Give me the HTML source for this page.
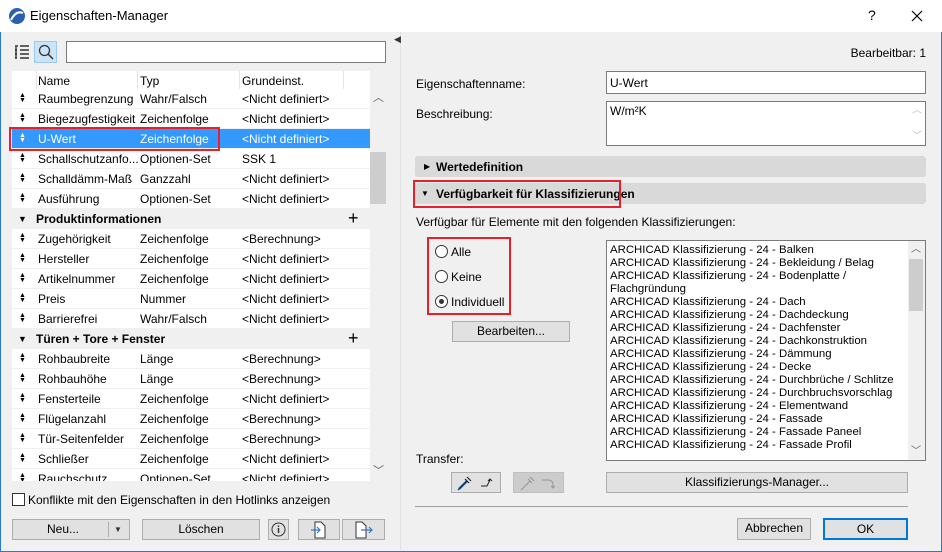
<!DOCTYPE html>
<html><head><meta charset="utf-8"><style>
*{box-sizing:border-box;margin:0;padding:0}
body{width:942px;height:552px;overflow:hidden;background:#f0f0f0;font-family:"Liberation Sans",sans-serif;font-size:12px;color:#000;position:relative}
.a{position:absolute}
.t{position:absolute;white-space:nowrap;line-height:14px}
.btn{position:absolute;background:#e1e1e1;border:1px solid #adadad;text-align:center;line-height:19px}
.row{position:absolute;left:12px;width:358px;height:20px;background:#fff;border-bottom:1px solid #f0f0f0}
.row span{position:absolute;top:3px;white-space:nowrap}
.row span.s{left:7px;top:4px;font-size:7px;line-height:5px}
.grp{background:#f0f0f0;font-weight:bold}
.sel{background:#3399ff;color:#fff}
.li{position:absolute;left:610px;white-space:nowrap;line-height:13px;font-size:11.4px}
</style></head><body>
<div class="a" style="left:0;top:0;width:942px;height:552px;border:1px solid #2b79d4;border-top:none"></div>
<div class="a" style="left:0;top:0;width:942px;height:32px;background:#fff"></div>
<svg class="a" style="left:8px;top:7px" width="18" height="18"><circle cx="9" cy="9" r="8" fill="#2d5fb0"/><path d="M3 13 Q8 3 15 6" stroke="#fff" stroke-width="2" fill="none"/></svg>
<div class="t" style="left:30px;top:9px;font-size:13px">Eigenschaften-Manager</div>
<div class="t" style="left:868px;top:8px;font-size:14px">?</div>
<svg class="a" style="left:911px;top:10px" width="12" height="12"><path d="M1 1L11 11M11 1L1 11" stroke="#000" stroke-width="1.2"/></svg>

<svg class="a" style="left:14px;top:45px" width="16" height="14"><path d="M1 1h3M6 1h9M1 5h2M6 5h9M1 9h2M6 9h9M1 13h2M6 13h9M2 2v11" stroke="#333" stroke-width="1.4" fill="none"/></svg>
<div class="a" style="left:34px;top:41px;width:23px;height:22px;background:#cce4f7;border:1px solid #99c9ef"></div>
<svg class="a" style="left:38px;top:44px" width="16" height="16"><circle cx="6.5" cy="6.5" r="5" stroke="#333" stroke-width="1.3" fill="none"/><path d="M10 10l5 5" stroke="#333" stroke-width="1.5"/></svg>
<div class="a" style="left:66px;top:41px;width:320px;height:22px;background:#fff;border:1px solid #7a7a7a"></div>

<div class="a" style="left:12px;top:71px;width:358px;height:18px;background:#fff"></div>
<div class="t" style="left:38px;top:74px">Name</div>
<div class="t" style="left:140px;top:74px">Typ</div>
<div class="t" style="left:242px;top:74px">Grundeinst.</div>
<div class="a" style="left:36px;top:71px;width:1px;height:18px;background:#e5e5e5"></div>
<div class="a" style="left:137px;top:71px;width:1px;height:18px;background:#e5e5e5"></div>
<div class="a" style="left:239px;top:71px;width:1px;height:18px;background:#e5e5e5"></div>
<div class="a" style="left:343px;top:71px;width:1px;height:18px;background:#e5e5e5"></div>

<div class="a" style="left:12px;top:89px;width:358px;height:392px;overflow:hidden">
<div style="position:relative;left:-12px;top:-89px">
<div class="row" style="top:89px"><span class="s">▲<br>▼</span><span style="left:26px">Raumbegrenzung</span><span style="left:128px">Wahr/Falsch</span><span style="left:230px">&lt;Nicht definiert&gt;</span></div>
<div class="row" style="top:109px"><span class="s">▲<br>▼</span><span style="left:26px">Biegezugfestigkeit</span><span style="left:128px">Zeichenfolge</span><span style="left:230px">&lt;Nicht definiert&gt;</span></div>
<div class="row sel" style="top:129px"><span class="s">▲<br>▼</span><span style="left:26px">U-Wert</span><span style="left:128px">Zeichenfolge</span><span style="left:230px">&lt;Nicht definiert&gt;</span></div>
<div class="row" style="top:149px"><span class="s">▲<br>▼</span><span style="left:26px">Schallschutzanfo...</span><span style="left:128px">Optionen-Set</span><span style="left:230px">SSK 1</span></div>
<div class="row" style="top:169px"><span class="s">▲<br>▼</span><span style="left:26px">Schalldämm-Maß</span><span style="left:128px">Ganzzahl</span><span style="left:230px">&lt;Nicht definiert&gt;</span></div>
<div class="row" style="top:189px"><span class="s">▲<br>▼</span><span style="left:26px">Ausführung</span><span style="left:128px">Optionen-Set</span><span style="left:230px">&lt;Nicht definiert&gt;</span></div>
<div class="row grp" style="top:209px"><span style="left:6px;font-size:9px;top:5px">▼</span><span style="left:24px">Produktinformationen</span><span style="left:336px;font-weight:normal;font-size:18px;top:-1px">+</span></div>
<div class="row" style="top:229px"><span class="s">▲<br>▼</span><span style="left:26px">Zugehörigkeit</span><span style="left:128px">Zeichenfolge</span><span style="left:230px">&lt;Berechnung&gt;</span></div>
<div class="row" style="top:249px"><span class="s">▲<br>▼</span><span style="left:26px">Hersteller</span><span style="left:128px">Zeichenfolge</span><span style="left:230px">&lt;Nicht definiert&gt;</span></div>
<div class="row" style="top:269px"><span class="s">▲<br>▼</span><span style="left:26px">Artikelnummer</span><span style="left:128px">Zeichenfolge</span><span style="left:230px">&lt;Nicht definiert&gt;</span></div>
<div class="row" style="top:289px"><span class="s">▲<br>▼</span><span style="left:26px">Preis</span><span style="left:128px">Nummer</span><span style="left:230px">&lt;Nicht definiert&gt;</span></div>
<div class="row" style="top:309px"><span class="s">▲<br>▼</span><span style="left:26px">Barrierefrei</span><span style="left:128px">Wahr/Falsch</span><span style="left:230px">&lt;Nicht definiert&gt;</span></div>
<div class="row grp" style="top:329px"><span style="left:6px;font-size:9px;top:5px">▼</span><span style="left:24px">Türen + Tore + Fenster</span><span style="left:336px;font-weight:normal;font-size:18px;top:-1px">+</span></div>
<div class="row" style="top:349px"><span class="s">▲<br>▼</span><span style="left:26px">Rohbaubreite</span><span style="left:128px">Länge</span><span style="left:230px">&lt;Berechnung&gt;</span></div>
<div class="row" style="top:369px"><span class="s">▲<br>▼</span><span style="left:26px">Rohbauhöhe</span><span style="left:128px">Länge</span><span style="left:230px">&lt;Berechnung&gt;</span></div>
<div class="row" style="top:389px"><span class="s">▲<br>▼</span><span style="left:26px">Fensterteile</span><span style="left:128px">Zeichenfolge</span><span style="left:230px">&lt;Nicht definiert&gt;</span></div>
<div class="row" style="top:409px"><span class="s">▲<br>▼</span><span style="left:26px">Flügelanzahl</span><span style="left:128px">Zeichenfolge</span><span style="left:230px">&lt;Berechnung&gt;</span></div>
<div class="row" style="top:429px"><span class="s">▲<br>▼</span><span style="left:26px">Tür-Seitenfelder</span><span style="left:128px">Zeichenfolge</span><span style="left:230px">&lt;Berechnung&gt;</span></div>
<div class="row" style="top:449px"><span class="s">▲<br>▼</span><span style="left:26px">Schließer</span><span style="left:128px">Zeichenfolge</span><span style="left:230px">&lt;Nicht definiert&gt;</span></div>
<div class="row" style="top:469px"><span class="s">▲<br>▼</span><span style="left:26px">Rauchschutz</span><span style="left:128px">Optionen-Set</span><span style="left:230px">&lt;Nicht definiert&gt;</span></div>
</div></div>
<div class="a" style="left:9px;top:127px;width:211px;height:24px;border:2px solid #e8202a"></div>
<div class="a" style="left:370px;top:89px;width:16px;height:392px;background:#f0f0f0"></div>
<div class="t" style="left:373px;top:91px;font-size:11px;color:#606060">︿</div>
<div class="a" style="left:370px;top:152px;width:16px;height:52px;background:#cdcdcd"></div>
<div class="t" style="left:373px;top:464px;font-size:11px;color:#606060">﹀</div>

<div class="a" style="left:12px;top:493px;width:13px;height:13px;background:#fff;border:1px solid #333"></div>
<div class="t" style="left:28px;top:493px">Konflikte mit den Eigenschaften in den Hotlinks anzeigen</div>
<div class="btn" style="left:12px;top:519px;width:118px;height:21px;text-align:left;padding-left:34px">Neu...</div>
<div class="a" style="left:108px;top:522px;width:1px;height:15px;background:#adadad"></div>
<div class="t" style="left:114px;top:523px;font-size:8px;color:#333">▼</div>
<div class="btn" style="left:142px;top:519px;width:118px;height:21px">Löschen</div>
<div class="btn" style="left:268px;top:519px;width:21px;height:21px"></div>
<svg class="a" style="left:271px;top:522px" width="15" height="15"><circle cx="7.5" cy="7.5" r="6.5" stroke="#333" fill="none"/><path d="M7.5 6v5M7.5 3.5v1.5" stroke="#333" stroke-width="1.5"/></svg>
<div class="btn" style="left:298px;top:519px;width:42px;height:21px"></div>
<svg class="a" style="left:310px;top:521px" width="18" height="18"><path d="M5 1h6l4 4v12H5z" stroke="#333" fill="#fff"/><path d="M1 9h9M7 6l3 3-3 3" stroke="#2b79d4" fill="none" stroke-width="1.2"/></svg>
<div class="btn" style="left:342px;top:519px;width:43px;height:21px"></div>
<svg class="a" style="left:354px;top:521px" width="20" height="18"><path d="M2 1h6l4 4v12H2z" stroke="#333" fill="#fff"/><path d="M7 9h11M15 6l3 3-3 3" stroke="#2b79d4" fill="none" stroke-width="1.2"/></svg>

<div class="a" style="left:400px;top:32px;width:1px;height:518px;background:#e0e0e0"></div>
<div class="t" style="left:394px;top:32px;font-size:9px;color:#333">◀</div>

<div class="t" style="left:840px;top:46px;width:86px;text-align:right">Bearbeitbar: 1</div>
<div class="t" style="left:416px;top:77px">Eigenschaftenname:</div>
<div class="a" style="left:606px;top:71px;width:320px;height:23px;background:#fff;border:1px solid #7a7a7a"></div>
<div class="t" style="left:610px;top:76px">U-Wert</div>
<div class="t" style="left:416px;top:107px">Beschreibung:</div>
<div class="a" style="left:606px;top:101px;width:320px;height:45px;background:#fff;border:1px solid #7a7a7a"></div>
<div class="t" style="left:610px;top:104px">W/m²K</div>
<div class="t" style="left:912px;top:104px;font-size:10px;color:#bbb">︿</div>
<div class="t" style="left:912px;top:130px;font-size:10px;color:#bbb">﹀</div>

<div class="a" style="left:415px;top:156px;width:511px;height:21px;background:#d9d9d9;border-radius:3px"></div>
<div class="t" style="left:424px;top:160px;font-size:8px">▶</div>
<div class="t" style="left:436px;top:160px;font-weight:bold">Wertedefinition</div>
<div class="a" style="left:415px;top:183px;width:511px;height:21px;background:#d9d9d9;border-radius:3px"></div>
<div class="t" style="left:421px;top:187px;font-size:8px">▼</div>
<div class="t" style="left:436px;top:187px;font-weight:bold">Verfügbarkeit für Klassifizierungen</div>
<div class="a" style="left:413px;top:180px;width:208px;height:28px;border:2px solid #e8202a"></div>
<div class="t" style="left:416px;top:215px">Verfügbar für Elemente mit den folgenden Klassifizierungen:</div>

<div class="a" style="left:427px;top:237px;width:84px;height:78px;border:2px solid #e8202a"></div>
<div class="a" style="left:435px;top:245px;width:13px;height:13px;border-radius:50%;border:1px solid #333;background:#fff"></div>
<div class="t" style="left:451px;top:245px">Alle</div>
<div class="a" style="left:435px;top:270px;width:13px;height:13px;border-radius:50%;border:1px solid #333;background:#fff"></div>
<div class="t" style="left:451px;top:270px">Keine</div>
<div class="a" style="left:435px;top:295px;width:13px;height:13px;border-radius:50%;border:1px solid #333;background:#fff"></div>
<div class="a" style="left:439px;top:299px;width:5px;height:5px;border-radius:50%;background:#333"></div>
<div class="t" style="left:451px;top:295px">Individuell</div>
<div class="btn" style="left:452px;top:321px;width:118px;height:21px">Bearbeiten...</div>

<div class="a" style="left:606px;top:240px;width:320px;height:221px;background:#fff;border:1px solid #7a7a7a"></div>
<div class="li" style="top:244px">ARCHICAD Klassifizierung - 24 - Balken<br>ARCHICAD Klassifizierung - 24 - Bekleidung / Belag<br>ARCHICAD Klassifizierung - 24 - Bodenplatte /<br>Flachgründung<br>ARCHICAD Klassifizierung - 24 - Dach<br>ARCHICAD Klassifizierung - 24 - Dachdeckung<br>ARCHICAD Klassifizierung - 24 - Dachfenster<br>ARCHICAD Klassifizierung - 24 - Dachkonstruktion<br>ARCHICAD Klassifizierung - 24 - Dämmung<br>ARCHICAD Klassifizierung - 24 - Decke<br>ARCHICAD Klassifizierung - 24 - Durchbrüche / Schlitze<br>ARCHICAD Klassifizierung - 24 - Durchbruchsvorschlag<br>ARCHICAD Klassifizierung - 24 - Elementwand<br>ARCHICAD Klassifizierung - 24 - Fassade<br>ARCHICAD Klassifizierung - 24 - Fassade Paneel<br>ARCHICAD Klassifizierung - 24 - Fassade Profil</div>
<div class="a" style="left:908px;top:241px;width:17px;height:219px;background:#f0f0f0"></div>
<div class="t" style="left:911px;top:243px;font-size:10px;color:#606060">︿</div>
<div class="a" style="left:909px;top:259px;width:14px;height:52px;background:#cdcdcd"></div>
<div class="t" style="left:911px;top:445px;font-size:10px;color:#606060">﹀</div>

<div class="t" style="left:416px;top:452px">Transfer:</div>
<div class="btn" style="left:451px;top:472px;width:50px;height:21px"></div>
<svg class="a" style="left:456px;top:474px" width="42" height="17"><path d="M3 15l8-8" stroke="#2b79d4" stroke-width="2.5"/><path d="M2 16l9-9M9 5l4 4M11 3l4 4" stroke="#222" stroke-width="1.2" fill="none"/><path d="M25 12h6l3-6M32 7l2-2 2 2" stroke="#222" fill="none"/></svg>
<div class="btn" style="left:513px;top:472px;width:51px;height:21px;background:#cccccc;border-color:#bfbfbf"></div>
<svg class="a" style="left:519px;top:474px" width="42" height="17"><path d="M2 16l9-9M9 5l4 4M11 3l4 4" stroke="#999" stroke-width="1.2" fill="none"/><path d="M23 6h6q5 0 5 5v3M32 12l2 2 2-2" stroke="#999" fill="none"/></svg>
<div class="btn" style="left:606px;top:472px;width:302px;height:21px">Klassifizierungs-Manager...</div>
<div class="a" style="left:415px;top:506px;width:493px;height:1px;background:#a0a0a0"></div>
<div class="btn" style="left:737px;top:518px;width:74px;height:22px">Abbrechen</div>
<div class="btn" style="left:823px;top:518px;width:85px;height:22px;border:2px solid #0078d7;line-height:18px">OK</div>
</body></html>
